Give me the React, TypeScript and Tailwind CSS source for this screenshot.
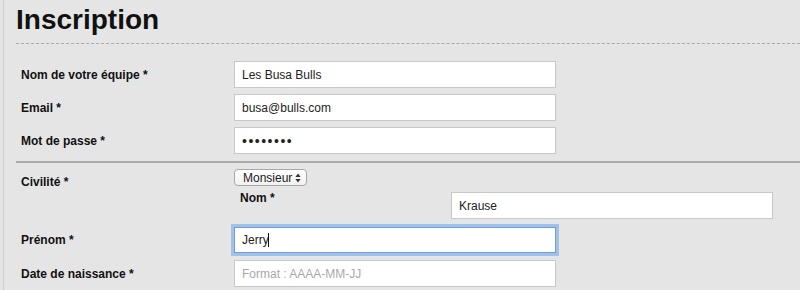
import React from "react";

const labelCls = "text-[12px] leading-[14px] font-bold text-[#111]";
const inputCls =
  "block h-[27px] w-[322px] border border-[#c8c8c8] bg-white px-[7px] text-[12px] text-[#222] outline-none placeholder:text-[#a9a9a9]";

function Row({ label, children }: { label: string; children: React.ReactNode }) {
  return (
    <div className="flex items-center">
      <div className={`w-[218px] pl-[5px] ${labelCls}`}>{label}</div>
      {children}
    </div>
  );
}

export default function App() {
  return (
    <div className="h-[290px] w-[800px] overflow-hidden bg-[#e5e5e5] font-['Liberation_Sans',Arial,sans-serif]">
      <div className="ml-[3px] h-full border-l border-[#cdcdcd] pl-[12px]">
        <div className="h-[43px] pt-[6px]">
          <h1 className="text-[28px] leading-[28px] font-bold text-[#111]">Inscription</h1>
        </div>
        <div className="border-t border-dashed border-[#a9a9a9]" />

        <div className="flex flex-col gap-[6px] pt-[17px]">
          <Row label="Nom de votre équipe *">
            <input type="text" defaultValue="Les Busa Bulls" className={inputCls} />
          </Row>
          <Row label="Email *">
            <input type="email" defaultValue="busa@bulls.com" className={inputCls} />
          </Row>
          <Row label="Mot de passe *">
            <input
              type="password"
              defaultValue="abcdefgh"
              className="block h-[27px] w-[322px] border border-[#c8c8c8] bg-white px-[7px] text-[14px] tracking-[1.5px] text-[#222] outline-none"
            />
          </Row>
        </div>

        <div className="mt-[7px] h-[2px] bg-[#ababab]" />

        {/* civilité + nom */}
        <div className="flex">
          <div className={`w-[218px] pl-[5px] pt-[12px] ${labelCls}`}>Civilité *</div>
          <div className="pt-[6px]">
            <div className="flex h-[17px] w-[73px] items-center justify-between rounded-[4px] border border-[#a8a8a8] bg-gradient-to-b from-white to-[#f1f1f1] pr-[5px] pl-[8px] text-[12px] text-[#222]">
              <span className="leading-[14px]">Monsieur</span>
              <svg width="6" height="10" viewBox="0 0 6 10">
                <path d="M3 0.5 L5.6 4 H0.4 Z" fill="#333" />
                <path d="M3 9.5 L5.6 6 H0.4 Z" fill="#333" />
              </svg>
            </div>
            <div className="mt-[5px] flex items-start">
              <div className={`w-[217px] pl-[6px] ${labelCls}`}>Nom *</div>
              <input type="text" defaultValue="Krause" className={`mt-[1px] ${inputCls}`} />
            </div>
          </div>
        </div>

        <div className="mt-[8px] flex flex-col gap-[7px]">
          <Row label="Prénom *">
            <div className="relative">
              <input
                type="text"
                defaultValue="Jerry"
                className="block h-[26px] w-[322px] border border-[#6d9fd6] bg-white px-[7px] text-[12px] text-[#222] outline-none ring-[3px] ring-[#9fc1ea]"
              />
              <span className="absolute top-[6px] left-[34px] h-[14px] w-px bg-[#111]" />
            </div>
          </Row>
          <Row label="Date de naissance *">
            <input type="text" placeholder="Format : AAAA-MM-JJ" className={inputCls} />
          </Row>
        </div>
      </div>
    </div>
  );
}
